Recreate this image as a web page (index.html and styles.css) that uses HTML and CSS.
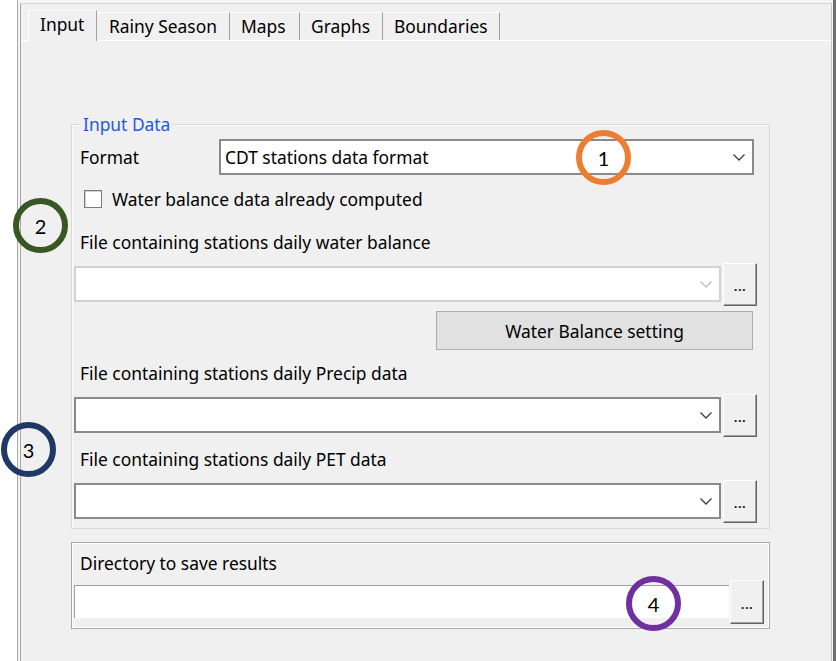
FILE: index.html
```html
<!DOCTYPE html>
<html>
<head>
<meta charset="utf-8">
<link rel="stylesheet" href="styles.css">
</head>
<body>
<div class="app">
  <div class="gutter"></div>
  <div class="frame">
    <div class="content">
      <div class="tabs">
        <div class="tab tab-input active">Input</div>
        <div class="tab tab-rainy">Rainy Season</div>
        <div class="tab tab-maps">Maps</div>
        <div class="tab tab-graphs">Graphs</div>
        <div class="tab tab-bounds">Boundaries</div>
      </div>
      <div class="panel">
        <div class="group input-group">
          <span class="legend">Input Data</span>
          <div class="format-row">
            <span class="format-label">Format</span>
            <div class="combo combo-format">
              <span class="combo-text">CDT stations data format</span>
              <svg class="chev" width="12" height="7" viewBox="0 0 12 7"><polyline points="0.5,0.5 6,6 11.5,0.5" fill="none" stroke="#3c3c3c" stroke-width="1.3"/></svg>
            </div>
          </div>
          <div class="check-row">
            <span class="checkbox"></span>
            <span class="check-text">Water balance data already computed</span>
          </div>
          <div class="field-label lbl-wb">File containing stations daily water balance</div>
          <div class="file-row">
            <div class="combo combo-file is-disabled">
              <svg class="chev" width="12" height="7" viewBox="0 0 12 7"><polyline points="0.5,0.5 6,6 11.5,0.5" fill="none" stroke="#bcbcbc" stroke-width="1.3"/></svg>
            </div>
            <div class="btn-dots">...</div>
          </div>
          <div class="wb-btn">Water Balance setting</div>
          <div class="field-label lbl-precip">File containing stations daily Precip data</div>
          <div class="file-row">
            <div class="combo combo-file">
              <svg class="chev" width="12" height="7" viewBox="0 0 12 7"><polyline points="0.5,0.5 6,6 11.5,0.5" fill="none" stroke="#3c3c3c" stroke-width="1.3"/></svg>
            </div>
            <div class="btn-dots">...</div>
          </div>
          <div class="field-label lbl-pet">File containing stations daily PET data</div>
          <div class="file-row">
            <div class="combo combo-file">
              <svg class="chev" width="12" height="7" viewBox="0 0 12 7"><polyline points="0.5,0.5 6,6 11.5,0.5" fill="none" stroke="#3c3c3c" stroke-width="1.3"/></svg>
            </div>
            <div class="btn-dots">...</div>
          </div>
        </div>
        <div class="group dir-group">
          <div class="field-label lbl-dir">Directory to save results</div>
          <div class="dir-row">
            <div class="textbox"></div>
            <div class="btn-dots btn-dir">...</div>
          </div>
        </div>
      </div>
    </div>
  </div>
  <div class="marker marker-1">1</div>
  <div class="marker marker-2">2</div>
  <div class="marker marker-3">3</div>
  <div class="marker marker-4">4</div>
</div>
</body>
</html>
```
FILE: styles.css
```css
* { box-sizing: border-box; }
html, body { margin: 0; padding: 0; background: #ffffff; }
body {
  font-family: "Noto Sans", "Open Sans", sans-serif;
  font-size: 17.4px;
  color: #000;
}
.app {
  position: relative;
  display: flex;
  width: 836px;
  height: 661px;
  overflow: hidden;
}
.gutter { width: 17px; background: #fff; flex: none; }
.frame {
  flex: 1;
  background: #f4f4f4;
  border-left: 1px solid #a8a8a8;
  border-right: 3px solid #6e6e6e;
  padding: 3px 1px 0 2px;
  display: flex;
}
.content {
  flex: 1;
  background: #f0f0f0;
  border-left: 1px solid #a8a8a8;
  border-top: 1px solid #d6d6d6;
  border-right: 1px solid #c4c4c4;
  display: flex;
  flex-direction: column;
}
.tabs {
  display: flex;
  align-items: flex-end;
  height: 36px;
  padding-left: 7px;
}
.tab {
  height: 28px;
  padding: 2px 0 0 11px;
  line-height: 22px;
  border-top: 1px solid #ffffff;
  border-left: 1px solid #ffffff;
  border-right: 1px solid #a0a0a0;
  background: #f0f0f0;
  white-space: nowrap;
}
.tab.active {
  height: 31px;
  margin-bottom: -1px;
  padding-top: 2px;
  position: relative;
  z-index: 1;
}
.tab-input { width: 69px; }
.tab-rainy { width: 133px; border-left: none; padding-left: 12px; }
.tab-maps { width: 70px; border-left: none; }
.tab-graphs { width: 83px; border-left: none; }
.tab-bounds { width: 117px; border-left: none; }
.panel {
  flex: 1;
  border-top: 1px solid #ffffff;
  padding: 83px 0 0 50px;
}
.group {
  width: 699px;
  position: relative;
}
.input-group {
  border: 1px solid #d9d9d9;
  box-shadow: inset 1px 1px 0 #fbfbfb;
  padding: 0 0 5px 0;
}
.legend {
  position: absolute;
  left: 9px;
  top: -12px;
  padding: 0 2px;
  line-height: 22px;
  background: #f0f0f0;
  color: #2457e0;
}
.format-row {
  display: flex;
  align-items: center;
  margin-top: 14px;
  height: 36px;
}
.format-label { width: 147px; padding-left: 8px; }
.combo {
  position: relative;
  height: 36px;
  background: #fff;
  border: 2px solid #8a8a8a;
  display: flex;
  align-items: center;
}
.combo-format { width: 535px; padding-left: 4px; }
.combo-text { line-height: 22px; }
.chev { position: absolute; right: 7px; top: 13px; }
.check-row {
  display: flex;
  align-items: center;
  margin: 15px 0 0 12px;
  height: 18px;
}
.checkbox {
  width: 18px;
  height: 18px;
  background: #fff;
  border: 1px solid #7a7a7a;
  box-shadow: inset 1px 1px 0 #d0d0d0;
  margin-right: 10px;
  flex: none;
}
.check-text { line-height: 22px; }
.field-label {
  margin-left: 8px;
  line-height: 20px;
  height: 20px;
  white-space: nowrap;
}
.lbl-wb { margin-top: 24px; }
.lbl-precip { margin-top: 13px; }
.lbl-pet { margin-top: 12px; }
.file-row {
  display: flex;
  align-items: flex-start;
  margin: 11px 0 0 2px;
  height: 43px;
}
.combo-file { width: 647px; margin-top: 3px; }
.combo-file.is-disabled { border-color: #d2d2d2; }
.btn-dots {
  width: 34px;
  height: 43px;
  margin-left: 2px;
  background: #f0f0f0;
  border-top: 1px solid #ffffff;
  border-left: 1px solid #ffffff;
  border-right: 1px solid #646464;
  border-bottom: 1px solid #646464;
  box-shadow: inset -1px -1px 0 #a0a0a0;
  font-size: 13px;
  font-weight: 700;
  letter-spacing: 0.5px;
  display: flex;
  justify-content: center;
  align-items: center;
  padding-top: 3px;
  color: #1a1a1a;
}
.wb-btn {
  margin: 5px 0 0 364px;
  width: 317px;
  height: 39px;
  background: #e1e1e1;
  border: 1px solid #adadad;
  display: flex;
  align-items: center;
  justify-content: center;
}
.dir-group {
  margin-top: 13px;
  border: 1px solid #a8a8a8;
  box-shadow: inset 1px 1px 0 #ffffff, inset -1px -1px 0 #ffffff;
  padding: 0 0 4px 0;
}
.lbl-dir { margin-top: 10px; }
.dir-row {
  display: flex;
  align-items: flex-start;
  margin: 7px 0 0 2px;
  height: 44px;
}
.textbox {
  width: 655px;
  height: 33px;
  margin-top: 5px;
  background: #fff;
  border-top: 1px solid #a0a0a0;
  border-left: 1px solid #a0a0a0;
}
.btn-dir { height: 44px; margin-left: 1px; }
.marker {
  position: absolute;
  width: 55px;
  height: 55px;
  border-radius: 50%;
  border: 6px solid;
  background: transparent;
  font-family: "Lato", "Noto Sans", sans-serif;
  font-size: 20px;
  color: #000;
  display: flex;
  align-items: center;
  justify-content: center;
  z-index: 5;
}
.marker-1 { left: 576px; top: 130px; border-color: #ed7d31; }
.marker-2 { left: 13px; top: 198px; border-color: #385723; }
.marker-3 { left: 1px; top: 422px; border-color: #1f3864; }
.marker-4 { left: 626px; top: 576px; border-color: #7030a0; }
```
